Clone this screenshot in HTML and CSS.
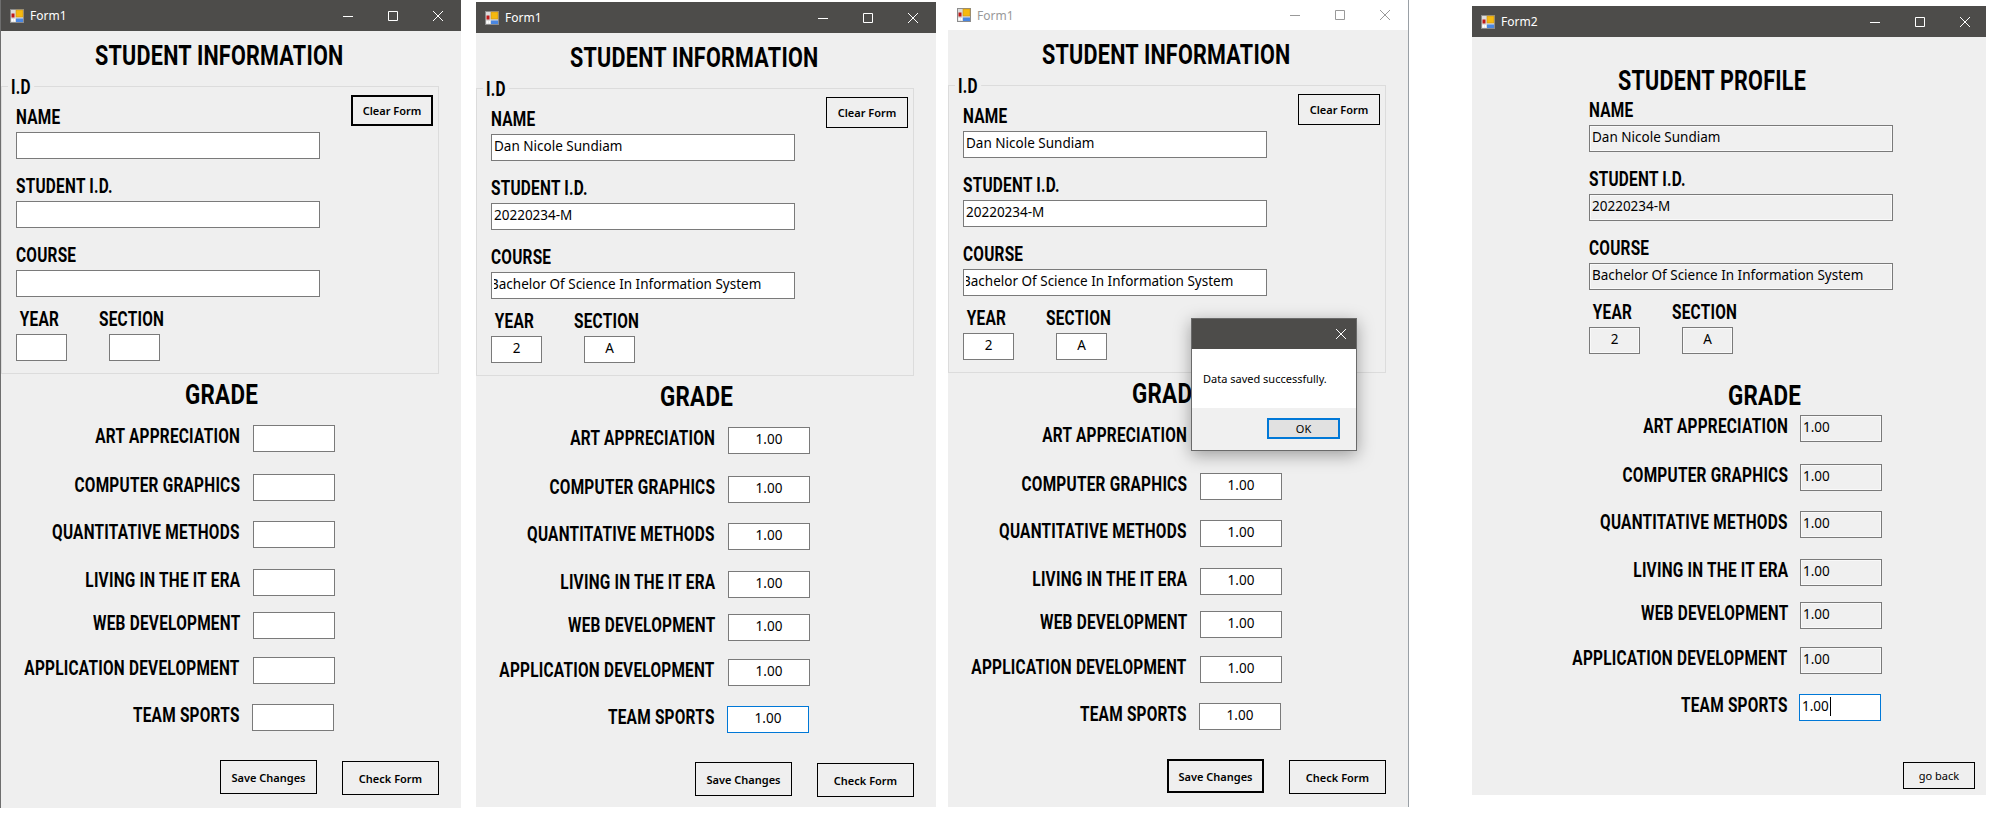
FILE: index.html
```html
<!DOCTYPE html>
<html>
  <head>
    <title>Student forms</title>
    <link rel="stylesheet" href="styles.css">
  </head>

  <body>
    <!-- Form1, empty -->
    <div class="window window-one">
      <div class="titlebar">
        <svg class="app-icon" viewBox="0 0 14 14"><rect x="0.5" y="0.5" width="13" height="13" fill="#dcdcdc" stroke="#8c8c8c"/><rect x="6" y="1" width="7" height="7" fill="#f5b90f" stroke="#c8921a" stroke-width="0.6"/><rect x="1.5" y="4.5" width="3" height="4" fill="#c01818"/><rect x="6" y="9.5" width="7" height="3.5" fill="#4a86e0"/><rect x="1.5" y="10" width="1.5" height="2.5" fill="#fff"/><rect x="3.5" y="10" width="1.5" height="2.5" fill="#fff"/></svg>
        <span class="title-text">Form1</span>
        <div class="controls">
          <svg viewBox="0 0 10 10"><path d="M0 5.5h10"/></svg>
          <svg viewBox="0 0 10 10"><path d="M.5.5h9v9h-9z"/></svg>
          <svg viewBox="0 0 10 10"><path d="M0 0l10 10M10 0L0 10"/></svg>
        </div>
      </div>
      <h1 class="form-heading">STUDENT INFORMATION</h1>
      <div class="group">
        <span class="group-legend">I.D</span>
        <div class="group-fields">
          <label class="caption">NAME</label>
          <input class="field" type="text" value="" />
          <label class="caption">STUDENT I.D.</label>
          <input class="field" type="text" value="" />
          <label class="caption">COURSE</label>
          <input class="field" type="text" value="" />
          <div class="year-section">
            <div class="year-col">
              <label class="caption">YEAR</label>
              <input class="field center" type="text" value="" />
            </div>
            <div class="section-col">
              <label class="caption">SECTION</label>
              <input class="field center" type="text" value="" />
            </div>
          </div>
        </div>
        <button class="button clear-button default">Clear Form</button>
      </div>
      <h2 class="grade-heading">GRADE</h2>
      <div class="grades">
        <label class="caption">ART APPRECIATION</label><input class="field center" type="text" value="" />
        <label class="caption">COMPUTER GRAPHICS</label><input class="field center" type="text" value="" />
        <label class="caption">QUANTITATIVE METHODS</label><input class="field center" type="text" value="" />
        <label class="caption">LIVING IN THE IT ERA</label><input class="field center" type="text" value="" />
        <label class="caption">WEB DEVELOPMENT</label><input class="field center" type="text" value="" />
        <label class="caption">APPLICATION DEVELOPMENT</label><input class="field center" type="text" value="" />
        <label class="caption">TEAM SPORTS</label><input class="field center last" type="text" value="" />
      </div>
      <div class="actions">
        <button class="button">Save Changes</button>
        <button class="button check-button">Check Form</button>
      </div>
    </div>

    <!-- Form1, filled in -->
    <div class="window window-two">
      <div class="titlebar">
        <svg class="app-icon" viewBox="0 0 14 14"><rect x="0.5" y="0.5" width="13" height="13" fill="#dcdcdc" stroke="#8c8c8c"/><rect x="6" y="1" width="7" height="7" fill="#f5b90f" stroke="#c8921a" stroke-width="0.6"/><rect x="1.5" y="4.5" width="3" height="4" fill="#c01818"/><rect x="6" y="9.5" width="7" height="3.5" fill="#4a86e0"/><rect x="1.5" y="10" width="1.5" height="2.5" fill="#fff"/><rect x="3.5" y="10" width="1.5" height="2.5" fill="#fff"/></svg>
        <span class="title-text">Form1</span>
        <div class="controls">
          <svg viewBox="0 0 10 10"><path d="M0 5.5h10"/></svg>
          <svg viewBox="0 0 10 10"><path d="M.5.5h9v9h-9z"/></svg>
          <svg viewBox="0 0 10 10"><path d="M0 0l10 10M10 0L0 10"/></svg>
        </div>
      </div>
      <h1 class="form-heading">STUDENT INFORMATION</h1>
      <div class="group">
        <span class="group-legend">I.D</span>
        <div class="group-fields">
          <label class="caption">NAME</label>
          <input class="field" type="text" value="Dan Nicole Sundiam" />
          <label class="caption">STUDENT I.D.</label>
          <input class="field" type="text" value="20220234-M" />
          <label class="caption">COURSE</label>
          <input class="field scrolled" type="text" value="Bachelor Of Science In Information System" />
          <div class="year-section">
            <div class="year-col">
              <label class="caption">YEAR</label>
              <input class="field center" type="text" value="2" />
            </div>
            <div class="section-col">
              <label class="caption">SECTION</label>
              <input class="field center" type="text" value="A" />
            </div>
          </div>
        </div>
        <button class="button clear-button">Clear Form</button>
      </div>
      <h2 class="grade-heading">GRADE</h2>
      <div class="grades">
        <label class="caption">ART APPRECIATION</label><input class="field center" type="text" value="1.00" />
        <label class="caption">COMPUTER GRAPHICS</label><input class="field center" type="text" value="1.00" />
        <label class="caption">QUANTITATIVE METHODS</label><input class="field center" type="text" value="1.00" />
        <label class="caption">LIVING IN THE IT ERA</label><input class="field center" type="text" value="1.00" />
        <label class="caption">WEB DEVELOPMENT</label><input class="field center" type="text" value="1.00" />
        <label class="caption">APPLICATION DEVELOPMENT</label><input class="field center" type="text" value="1.00" />
        <label class="caption">TEAM SPORTS</label><input class="field center last active" type="text" value="1.00" />
      </div>
      <div class="actions">
        <button class="button">Save Changes</button>
        <button class="button check-button">Check Form</button>
      </div>
    </div>

    <!-- Form1, inactive, with the message box on top -->
    <div class="window window-three">
      <div class="titlebar">
        <svg class="app-icon" viewBox="0 0 14 14"><rect x="0.5" y="0.5" width="13" height="13" fill="#dcdcdc" stroke="#8c8c8c"/><rect x="6" y="1" width="7" height="7" fill="#f5b90f" stroke="#c8921a" stroke-width="0.6"/><rect x="1.5" y="4.5" width="3" height="4" fill="#c01818"/><rect x="6" y="9.5" width="7" height="3.5" fill="#4a86e0"/><rect x="1.5" y="10" width="1.5" height="2.5" fill="#fff"/><rect x="3.5" y="10" width="1.5" height="2.5" fill="#fff"/></svg>
        <span class="title-text">Form1</span>
        <div class="controls">
          <svg viewBox="0 0 10 10"><path d="M0 5.5h10"/></svg>
          <svg viewBox="0 0 10 10"><path d="M.5.5h9v9h-9z"/></svg>
          <svg viewBox="0 0 10 10"><path d="M0 0l10 10M10 0L0 10"/></svg>
        </div>
      </div>
      <h1 class="form-heading">STUDENT INFORMATION</h1>
      <div class="group">
        <span class="group-legend">I.D</span>
        <div class="group-fields">
          <label class="caption">NAME</label>
          <input class="field" type="text" value="Dan Nicole Sundiam" />
          <label class="caption">STUDENT I.D.</label>
          <input class="field" type="text" value="20220234-M" />
          <label class="caption">COURSE</label>
          <input class="field scrolled" type="text" value="Bachelor Of Science In Information System" />
          <div class="year-section">
            <div class="year-col">
              <label class="caption">YEAR</label>
              <input class="field center" type="text" value="2" />
            </div>
            <div class="section-col">
              <label class="caption">SECTION</label>
              <input class="field center" type="text" value="A" />
            </div>
          </div>
        </div>
        <button class="button clear-button">Clear Form</button>
      </div>
      <h2 class="grade-heading">GRADE</h2>
      <div class="grades">
        <label class="caption">ART APPRECIATION</label><input class="field center" type="text" value="1.00" />
        <label class="caption">COMPUTER GRAPHICS</label><input class="field center" type="text" value="1.00" />
        <label class="caption">QUANTITATIVE METHODS</label><input class="field center" type="text" value="1.00" />
        <label class="caption">LIVING IN THE IT ERA</label><input class="field center" type="text" value="1.00" />
        <label class="caption">WEB DEVELOPMENT</label><input class="field center" type="text" value="1.00" />
        <label class="caption">APPLICATION DEVELOPMENT</label><input class="field center" type="text" value="1.00" />
        <label class="caption">TEAM SPORTS</label><input class="field center last" type="text" value="1.00" />
      </div>
      <div class="actions">
        <button class="button default">Save Changes</button>
        <button class="button check-button">Check Form</button>
      </div>

      <div class="message-box">
        <div class="message-title">
          <svg viewBox="0 0 10 10"><path d="M0 0l10 10M10 0L0 10"/></svg>
        </div>
        <div class="message-text">Data saved successfully.</div>
        <div class="message-footer">
          <button class="ok-button">OK</button>
        </div>
      </div>
    </div>

    <!-- Form2, read only profile -->
    <div class="window window-four">
      <div class="titlebar">
        <svg class="app-icon" viewBox="0 0 14 14"><rect x="0.5" y="0.5" width="13" height="13" fill="#dcdcdc" stroke="#8c8c8c"/><rect x="6" y="1" width="7" height="7" fill="#f5b90f" stroke="#c8921a" stroke-width="0.6"/><rect x="1.5" y="4.5" width="3" height="4" fill="#c01818"/><rect x="6" y="9.5" width="7" height="3.5" fill="#4a86e0"/><rect x="1.5" y="10" width="1.5" height="2.5" fill="#fff"/><rect x="3.5" y="10" width="1.5" height="2.5" fill="#fff"/></svg>
        <span class="title-text">Form2</span>
        <div class="controls">
          <svg viewBox="0 0 10 10"><path d="M0 5.5h10"/></svg>
          <svg viewBox="0 0 10 10"><path d="M.5.5h9v9h-9z"/></svg>
          <svg viewBox="0 0 10 10"><path d="M0 0l10 10M10 0L0 10"/></svg>
        </div>
      </div>
      <h1 class="form-heading">STUDENT PROFILE</h1>
      <div class="profile-fields">
        <label class="caption">NAME</label>
        <input class="field readonly" type="text" value="Dan Nicole Sundiam" readonly />
        <label class="caption">STUDENT I.D.</label>
        <input class="field readonly" type="text" value="20220234-M" readonly />
        <label class="caption">COURSE</label>
        <input class="field readonly" type="text" value="Bachelor Of Science In Information System" readonly />
        <div class="year-section">
          <div class="year-col">
            <label class="caption">YEAR</label>
            <input class="field readonly center" type="text" value="2" readonly />
          </div>
          <div class="section-col">
            <label class="caption">SECTION</label>
            <input class="field readonly center" type="text" value="A" readonly />
          </div>
        </div>
      </div>
      <h2 class="grade-heading">GRADE</h2>
      <div class="grades">
        <label class="caption">ART APPRECIATION</label><input class="field readonly" type="text" value="1.00" readonly />
        <label class="caption">COMPUTER GRAPHICS</label><input class="field readonly" type="text" value="1.00" readonly />
        <label class="caption">QUANTITATIVE METHODS</label><input class="field readonly" type="text" value="1.00" readonly />
        <label class="caption">LIVING IN THE IT ERA</label><input class="field readonly" type="text" value="1.00" readonly />
        <label class="caption">WEB DEVELOPMENT</label><input class="field readonly" type="text" value="1.00" readonly />
        <label class="caption">APPLICATION DEVELOPMENT</label><input class="field readonly" type="text" value="1.00" readonly />
        <label class="caption">TEAM SPORTS</label>
        <div class="caret-wrap">
          <input class="field last active" type="text" value="1.00" />
          <span class="caret"></span>
        </div>
      </div>
      <div class="actions">
        <button class="button back-button">go back</button>
      </div>
    </div>
  </body>
</html>
```

FILE: styles.css
```css
body {
  font-family: "Noto Sans", sans-serif;
  background-color: #fff;
  margin: 0;
  padding: 0;
  width: 2002px;
  height: 838px;
  overflow: hidden;
  position: relative;
}

.window {
  position: absolute;
  width: 460px;
  background-color: #efefef;
  border-left: 1px solid #fff;
}

.window-one {
  left: 0;
  top: 0;
  height: 808px;
  border-left-color: #6e6e6e;
}

.window-two {
  left: 475px;
  top: 2px;
  height: 805px;
}

.window-three {
  left: 947px;
  top: 0;
  height: 807px;
  border-right: 1px solid #9aa0a6;
}

.window-four {
  left: 1472px;
  top: 6px;
  width: 514px;
  height: 789px;
  border-left: none;
}

/* title bar */
.titlebar {
  height: 31px;
  background-color: #4d4c4a;
  color: #fff;
  display: flex;
  align-items: center;
  padding-left: 9px;
  padding-right: 18px;
}

.window-three .titlebar {
  height: 30px;
  background-color: #fff;
  color: #999;
}

.window-four .titlebar {
  padding-right: 16px;
}

.app-icon {
  width: 14px;
  height: 14px;
  margin-right: 6px;
}

.title-text {
  font-size: 12px;
}

.controls {
  margin-left: auto;
  display: flex;
  gap: 35px;
}

.controls svg,
.message-title svg {
  width: 10px;
  height: 10px;
  fill: none;
  stroke: currentColor;
  stroke-width: 1;
  display: block;
}

/* headings and captions, Roboto squeezed to the width of the condensed face */
.form-heading,
.grade-heading,
.caption,
.group-legend {
  font-family: "Roboto", sans-serif;
  font-weight: 700;
  color: #000;
  white-space: nowrap;
  width: max-content;
  letter-spacing: 0.3px;
  transform: scaleX(0.77);
  transform-origin: left;
}

.form-heading,
.grade-heading {
  font-size: 28px;
  line-height: 28px;
  margin: 0;
}

.form-heading {
  padding-top: 11px;
  margin-left: 94px;
}

.grade-heading {
  margin-top: 7px;
  margin-left: 184px;
  transform: scaleX(0.8);
}

.caption {
  display: block;
  font-size: 20px;
  line-height: 22px;
}

/* group box */
.group {
  position: relative;
  display: flex;
  justify-content: space-between;
  align-items: flex-start;
  width: 438px;
  height: 288px;
  margin-top: 16px;
  border: 1px solid #dcdcdc;
  padding: 8px 5px 0 14px;
  box-sizing: border-box;
}

.group-legend {
  position: absolute;
  left: 6px;
  top: -10px;
  padding: 0 4px;
  background-color: #efefef;
  font-size: 20px;
  line-height: 20px;
}

.group-fields {
  padding-top: 11px;
  width: 304px;
}

.group-fields .caption,
.profile-fields .caption {
  margin-bottom: 4px;
}

.field {
  display: block;
  box-sizing: border-box;
  width: 304px;
  height: 27px;
  margin: 0 0 16px;
  padding: 0 2px 3px;
  border: 1px solid #7a7a7a;
  border-radius: 0;
  outline: none;
  background-color: #fff;
  color: #000;
  font-family: "Noto Sans", sans-serif;
  font-size: 13.5px;
}

.scrolled {
  text-indent: -4px;
}

.center {
  text-align: center;
}

.readonly {
  background-color: #f0f0f0;
  box-shadow: inset 0 0 0 1px #f9f9f9;
}

.active {
  border-color: #0078d7;
}

.year-section {
  display: flex;
  margin-top: -5px;
}

.year-col {
  width: 83px;
}

.year-col .caption {
  padding-left: 5px;
}

.section-col .field {
  margin-left: 10px;
}

.year-section .field {
  width: 51px;
  margin-bottom: 0;
}

/* grades */
.grades {
  display: grid;
  grid-template-columns: 239px 82px;
  grid-template-rows: 49px 47px 48px 43px 45px 47px 27px;
  column-gap: 13px;
  margin-top: 16px;
}

.grades .caption {
  justify-self: end;
  transform-origin: right;
}

.grades .field {
  width: 82px;
  margin: 0;
}

.grades .last {
  margin-left: -1px;
}

/* buttons */
.button {
  box-sizing: border-box;
  width: 97px;
  height: 34px;
  border: 1px solid #000;
  background-color: #efefef;
  color: #000;
  font-family: "Noto Sans", sans-serif;
  font-size: 11px;
  font-weight: 600;
  padding: 0;
}

.button.default {
  border-width: 2px;
}

.clear-button {
  width: 82px;
  height: 31px;
}

.actions {
  display: flex;
  gap: 25px;
  margin-top: 29px;
  padding-left: 219px;
  align-items: flex-start;
}

.check-button {
  margin-top: 1px;
}

/* message box */
.message-box {
  position: absolute;
  left: 243px;
  top: 318px;
  width: 166px;
  height: 133px;
  box-sizing: border-box;
  border: 1px solid #6a6a6a;
  background-color: #fff;
  display: flex;
  flex-direction: column;
  box-shadow: 0 4px 16px rgba(0, 0, 0, 0.35);
}

.message-title {
  height: 30px;
  background-color: #4d4c4a;
  color: #fff;
  display: flex;
  align-items: center;
  justify-content: flex-end;
  padding-right: 10px;
}

.message-text {
  height: 59px;
  line-height: 59px;
  padding-left: 11px;
  font-size: 11px;
  color: #000;
}

.message-footer {
  flex: 1;
  background-color: #f0f0f0;
  display: flex;
  justify-content: flex-end;
  padding: 10px 16px 0 0;
}

.ok-button {
  box-sizing: border-box;
  width: 73px;
  height: 21px;
  border: 2px solid #0078d7;
  background-color: #e1e1e1;
  font-family: "Noto Sans", sans-serif;
  font-size: 11px;
  padding: 0;
}

/* Form2 */
.window-four .form-heading {
  padding-top: 30px;
  margin-left: 146px;
}

.profile-fields {
  width: 304px;
  margin-left: 117px;
  margin-top: 4px;
}

.window-four .grade-heading {
  margin-top: 28px;
  margin-left: 256px;
}

.window-four .grades {
  margin-top: 5px;
  grid-template-columns: 316px 82px;
  column-gap: 12px;
}

.caret-wrap {
  position: relative;
}

.caret {
  position: absolute;
  left: 30px;
  top: 3px;
  width: 1px;
  height: 19px;
  background-color: #000;
}

.window-four .actions {
  justify-content: flex-end;
  padding-right: 11px;
  margin-top: 41px;
}

.back-button {
  width: 72px;
  height: 27px;
  font-weight: 400;
}
```
